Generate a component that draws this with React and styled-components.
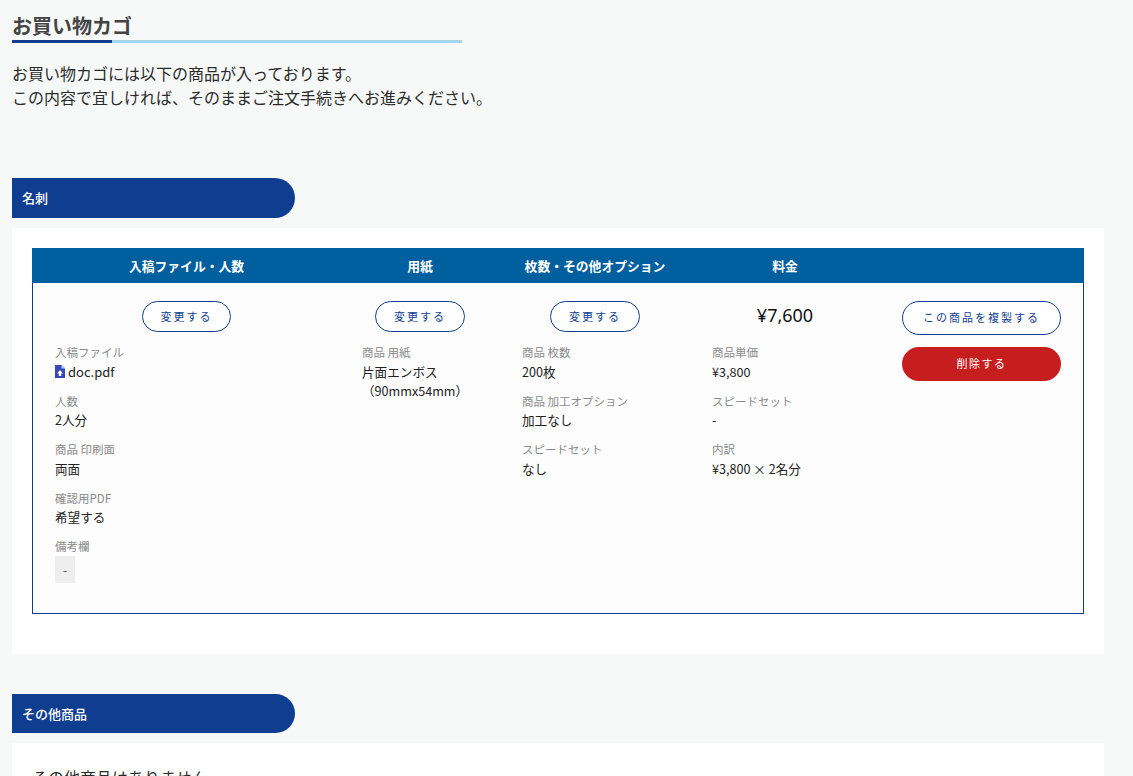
import React from 'react';
import styled, { createGlobalStyle } from 'styled-components';

const GlobalStyle = createGlobalStyle`
  html, body {
    margin: 0;
    padding: 0;
    height: 776px;
    overflow: hidden;
    background: #f7f9f9;
    color: #222;
    font-family: "Noto Sans CJK JP", "Noto Sans", sans-serif;
  }
`;

const Page = styled.div`
  width: 1092px;
  padding: 0 0 0 12px;
`;

const Title = styled.h1`
  margin: 0;
  padding-top: 11px;
  height: 29px;
  font-size: 20px;
  line-height: 29px;
  font-weight: 700;
  color: #444;
`;

const TitleRule = styled.div`
  width: 450px;
  height: 3px;
  background: linear-gradient(to right, #0f3e91 100px, #a3d4f0 100px);
`;

const Lead = styled.p`
  margin: 18px 0 0;
  font-size: 16px;
  line-height: 24px;
  color: #2b2b2b;
`;

const Band = styled.h2`
  margin: ${({ $top }) => $top}px 0 0;
  width: 283px;
  height: ${({ $h }) => $h}px;
  box-sizing: border-box;
  padding: 0 0 1px 10px;
  display: flex;
  align-items: center;
  background: #0f3e91;
  border-radius: 0 20px 20px 0;
  color: #fff;
  font-size: 13px;
  font-weight: 500;
`;

const Panel = styled.section`
  margin-top: 10px;
  background: #fff;
  padding: 20px 20px 40px;
`;

const CartTable = styled.div`
  height: 366px;
  box-sizing: border-box;
  border: 1px solid #0f3e91;
  background: #fdfdfd;
  display: flex;
  flex-direction: column;
`;

const HeadRow = styled.div`
  display: grid;
  grid-template-columns: 307px 160px 190px 190px 1fr;
  height: 35px;
  margin: -1px -1px 0;
  padding-left: 1px;
  background: #005f9e;
`;

const HeadCell = styled.div`
  color: #fff;
  font-size: 12.8px;
  font-weight: 700;
  line-height: 35px;
  text-align: center;
`;

const BodyRow = styled.div`
  display: grid;
  grid-template-columns: 307px 160px 190px 190px 1fr;
`;

const Cell = styled.div`
  padding: 18px 22px 0;
`;

const ChangeRow = styled.div`
  display: flex;
  justify-content: center;
  margin-bottom: 11px;
`;

const OutlineButton = styled.button`
  width: ${({ $w }) => $w}px;
  height: ${({ $h }) => $h}px;
  padding: 0 0 2px;
  box-sizing: border-box;
  border: 1px solid #0f3e91;
  border-radius: 20px;
  background: #fff;
  color: #0f3e91;
  font-family: inherit;
  font-size: 11px;
  letter-spacing: 2px;
`;

const DeleteButton = styled.button`
  width: 159px;
  height: 34px;
  margin-top: 12px;
  padding: 0 0 2px;
  display: block;
  border: 0;
  border-radius: 20px;
  background: #c61e1e;
  color: #fff;
  font-family: inherit;
  font-size: 11px;
  letter-spacing: 1.5px;
`;

const Price = styled.div`
  height: 31px;
  margin-bottom: 11px;
  font-family: "Noto Sans", sans-serif;
  font-size: 18px;
  font-weight: 400;
  line-height: 28px;
  text-align: center;
  color: #111;
`;

const Item = styled.dl`
  margin: 0 0 11px;
`;

const Label = styled.dt`
  font-size: 11.5px;
  line-height: 19px;
  color: #8a8a8a;
`;

const Value = styled.dd`
  margin: -0.5px 0 0;
  font-size: 12.6px;
  line-height: 19px;
  color: #222;
  white-space: pre-line;
`;

const FileLink = styled.span`
  display: flex;
  align-items: center;
  gap: 3px;
  font-size: 13px;
`;

const Note = styled.div`
  width: 20px;
  height: 27px;
  background: #eee;
  text-align: center;
  font-size: 12px;
  line-height: 27px;
  color: #444;
`;

const EmptyText = styled.p`
  margin: 2px 0 0;
  font-size: 16px;
  line-height: 24px;
  color: #2b2b2b;
`;

const PdfIcon = () => (
  <svg width="10" height="13" viewBox="0 0 10 13">
    <path d="M0 0h6.5L10 3.5V13H0z" fill="#3347b8" />
    <path d="M6.5 0v3.5H10z" fill="#c9cfee" />
    <path d="M5 5 8 8.5H6.2V11H3.8V8.5H2z" fill="#fff" />
  </svg>
);

const columns = ['入稿ファイル・人数', '用紙', '枚数・その他オプション', '料金', ''];

const Info = ({ label, children }) => (
  <Item>
    <Label>{label}</Label>
    <Value>{children}</Value>
  </Item>
);

const Change = () => (
  <ChangeRow>
    <OutlineButton type="button" $w={89.5} $h={31}>変更する</OutlineButton>
  </ChangeRow>
);

export default function App() {
  return (
    <Page>
      <GlobalStyle />
      <Title>お買い物カゴ</Title>
      <TitleRule />
      <Lead>
        お買い物カゴには以下の商品が入っております。
        <br />
        この内容で宜しければ、そのままご注文手続きへお進みください。
      </Lead>

      <Band $top={69} $h={40}>名刺</Band>
      <Panel>
        <CartTable>
          <HeadRow>
            {columns.map((c) => <HeadCell key={c}>{c}</HeadCell>)}
          </HeadRow>
          <BodyRow>
            <Cell>
              <Change />
              <Info label="入稿ファイル">
                <FileLink><PdfIcon />doc.pdf</FileLink>
              </Info>
              <Info label="人数">2人分</Info>
              <Info label="商品 印刷面">両面</Info>
              <Info label="確認用PDF">希望する</Info>
              <Item>
                <Label>備考欄</Label>
                <Note>-</Note>
              </Item>
            </Cell>
            <Cell>
              <Change />
              <Info label="商品 用紙">{'片面エンボス\n（90mmx54mm）'}</Info>
            </Cell>
            <Cell>
              <Change />
              <Info label="商品 枚数">200枚</Info>
              <Info label="商品 加工オプション">加工なし</Info>
              <Info label="スピードセット">なし</Info>
            </Cell>
            <Cell>
              <Price>¥7,600</Price>
              <Info label="商品単価">¥3,800</Info>
              <Info label="スピードセット">-</Info>
              <Info label="内訳">¥3,800 × 2名分</Info>
            </Cell>
            <Cell>
              <OutlineButton type="button" $w={159} $h={34}>この商品を複製する</OutlineButton>
              <DeleteButton type="button">削除する</DeleteButton>
            </Cell>
          </BodyRow>
        </CartTable>
      </Panel>

      <Band $top={40} $h={39}>その他商品</Band>
      <Panel>
        <EmptyText>その他商品はありません</EmptyText>
      </Panel>
    </Page>
  );
}
